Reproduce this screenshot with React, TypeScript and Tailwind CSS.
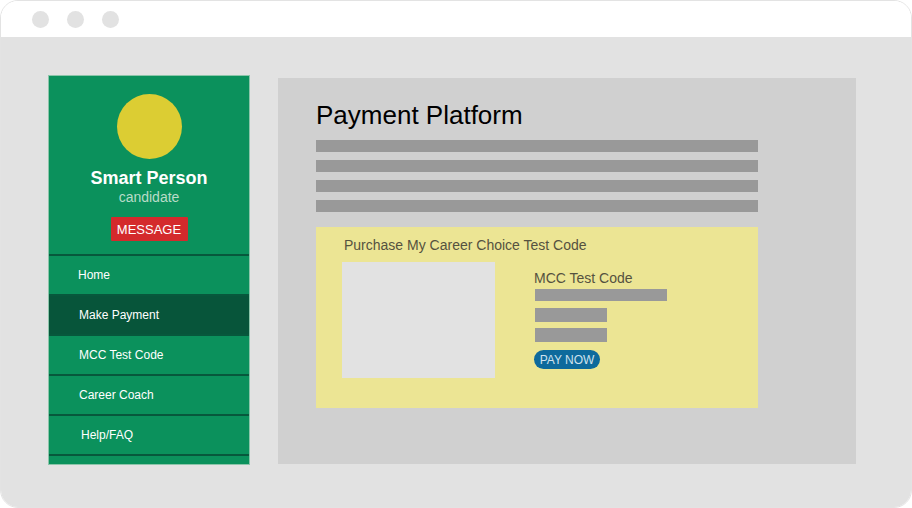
import React from "react"

const navItems = [
  { label: "Home", active: false, pad: "pl-[29px]" },
  { label: "Make Payment", active: true, pad: "pl-[30px]" },
  { label: "MCC Test Code", active: false, pad: "pl-[30px]" },
  { label: "Career Coach", active: false, pad: "pl-[30px]" },
  { label: "Help/FAQ", active: false, pad: "pl-[32px]" },
]

const Sidebar = () => {
  return (
    <div className="w-[202px] h-[390px] shrink-0 flex flex-col bg-[#0b915c] border border-[#8cc5aa] overflow-hidden">
      <div className="flex flex-col items-center pt-[18px] pb-[13px]">
        <div className="w-[65px] h-[65px] rounded-full bg-[#dccd33]" />
        <h3 className="mt-[8px] text-white text-[18px] leading-[22px] font-bold">Smart Person</h3>
        <p className="text-[#b8dcc8] text-[14px] leading-[17px]">candidate</p>
        <button className="mt-[11px] w-[77px] h-[24px] bg-[#d42a2c] text-white text-[13px] leading-none rounded-[1px]">
          MESSAGE
        </button>
      </div>
      <ul className="border-t-2 border-[#07583c]">
        {navItems.map((item) => (
          <li
            key={item.label}
            className={`h-[40px] flex items-center border-b-2 border-[#07583c] text-white text-[12px] ${item.pad} ${
              item.active ? "bg-[#07553a]" : ""
            }`}
          >
            {item.label}
          </li>
        ))}
      </ul>
    </div>
  )
}

const PurchaseCard = () => {
  return (
    <div className="mt-[15px] w-[442px] h-[181px] bg-[#ece594] pl-[26px] pt-[10px]">
      <p className="ml-[2px] text-[14px] leading-[17px] text-[#555240]">Purchase My Career Choice Test Code</p>
      <div className="mt-[8px] flex items-start">
        <div className="w-[153px] h-[116px] bg-[#e2e2e2]" />
        <div className="ml-[39px] mt-[8px] flex flex-col">
          <p className="text-[14px] leading-[17px] text-[#555240]">MCC Test Code</p>
          <div className="mt-[2px] ml-[1px] w-[132px] h-[12px] bg-[#999999]" />
          <div className="mt-[7px] ml-[1px] w-[72px] h-[14px] bg-[#999999]" />
          <div className="mt-[6px] ml-[1px] w-[72px] h-[14px] bg-[#999999]" />
          <button className="mt-[8px] w-[66px] h-[19px] rounded-full bg-[#0e6a9c] text-[#cfe2ee] text-[12px] leading-none">
            PAY NOW
          </button>
        </div>
      </div>
    </div>
  )
}

export default function App() {
  return (
    <div className="w-[912px] h-[508px] bg-white" style={{ fontFamily: '"Liberation Sans", Arial, sans-serif' }}>
      <div className="w-full h-full rounded-[18px] overflow-hidden border border-[#e3e3e3] flex flex-col">
        <div className="h-[36px] shrink-0 bg-white flex items-center gap-[18px] pl-[31px]">
          <span className="w-[17px] h-[17px] rounded-full bg-[#e2e2e2]" />
          <span className="w-[17px] h-[17px] rounded-full bg-[#e2e2e2]" />
          <span className="w-[17px] h-[17px] rounded-full bg-[#e2e2e2]" />
        </div>
        <div className="flex-1 bg-[#e2e2e2] flex items-start pt-[38px] pl-[47px]">
          <Sidebar />
          <div className="ml-[28px] mt-[3px] w-[578px] h-[386px] bg-[#d0d0d0] pl-[38px] pt-[23px]">
            <h1 className="text-[26px] leading-[29px] text-black">Payment Platform</h1>
            <div className="mt-[10px] flex flex-col gap-[8px]">
              <div className="w-[442px] h-[12px] bg-[#999999]" />
              <div className="w-[442px] h-[12px] bg-[#999999]" />
              <div className="w-[442px] h-[12px] bg-[#999999]" />
              <div className="w-[442px] h-[12px] bg-[#999999]" />
            </div>
            <PurchaseCard />
          </div>
        </div>
      </div>
    </div>
  )
}
